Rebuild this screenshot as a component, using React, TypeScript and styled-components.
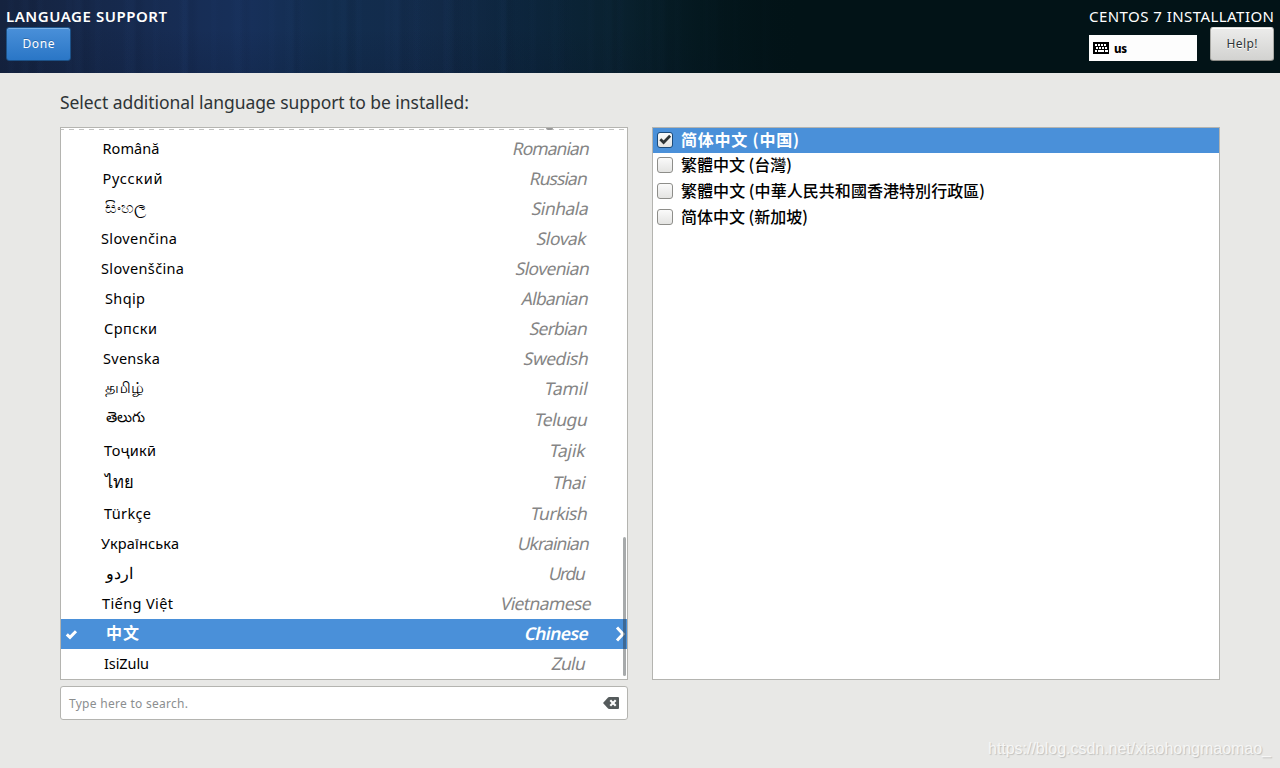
import React, { useLayoutEffect, useRef } from "react";
import styled, { createGlobalStyle, css } from "styled-components";

const GlobalStyle = createGlobalStyle`
  * { box-sizing: border-box; }
  body {
    margin: 0;
    background: #e8e8e6;
    font-family: "Noto Sans", "Open Sans", "Noto Sans CJK SC", sans-serif;
    color: #2e3436;
  }
`;

/* Text whose tracking is adjusted so the line fills a given width. */
const Line = styled.span`
  display: inline-block;
  white-space: pre;
`;

function Tracked({ width, children }: { width: number; children: string }) {
  const ref = useRef<HTMLSpanElement>(null);
  useLayoutEffect(() => {
    const el = ref.current;
    if (!el) return;
    el.style.letterSpacing = "0px";
    const natural = el.offsetWidth ? parseFloat(getComputedStyle(el).width) : 0;
    const gaps = Math.max(1, Array.from(children).length - 1);
    const spacing = (width - natural) / gaps;
    el.style.letterSpacing = `${spacing}px`;
    el.style.marginRight = `${-spacing}px`;
  }, [width, children]);
  return <Line ref={ref}>{children}</Line>;
}

const Page = styled.div`
  position: relative;
  width: 1280px;
  height: 768px;
  overflow: hidden;
  background: #e8e8e6;
`;

const Header = styled.header`
  display: flex;
  justify-content: space-between;
  height: 73px;
  padding: 6px 6px 0;
  background:
    linear-gradient(90deg, #02131700 400px, #02131760 620px, #021317 800px),
    repeating-linear-gradient(90deg, #2a4a8a00 0 7px, #2446800c 9px 12px, #0a183000 15px 17px, #0000 21px 29px),
    repeating-linear-gradient(90deg, #0000 0 19px, #2c54900c 24px 27px, #08142a14 31px 34px, #0000 40px 53px),
    linear-gradient(0deg, #0a163030, #0a163000 60%),
    linear-gradient(90deg, #15233f 0, #16284a 90px, #172d55 190px, #17305a 250px, #122d4e 330px, #132b4b 440px, #0f2a46 540px, #0e2a3e 620px, #08222e 700px, #021317 800px);
`;

const HeaderSide = styled.div<{ $end?: boolean }>`
  display: flex;
  flex-direction: column;
  align-items: ${(p) => (p.$end ? "flex-end" : "flex-start")};
`;

const HeaderTitle = styled.div<{ $bold?: boolean }>`
  height: 21px;
  line-height: 21px;
  font-size: 15px;
  font-weight: ${(p) => (p.$bold ? 600 : 400)};
  color: #fff;
`;

const Button = styled.button<{ $primary?: boolean }>`
  display: flex;
  align-items: center;
  justify-content: center;
  width: ${(p) => (p.$primary ? 65 : 64)}px;
  height: 34px;
  padding: 0 0 2px;
  border-radius: 3px;
  font-family: inherit;
  font-size: 12px;
  ${(p) =>
    p.$primary
      ? css`
          color: #fff;
          border: 1px solid #1c5187;
          background: linear-gradient(#4a90d9, #2a76c6);
          box-shadow: inset 0 1px #7fb2e6;
          text-shadow: 0 -1px #1c518788;
        `
      : css`
          color: #2e3436;
          border: 1px solid #a8a8a4;
          border-top-color: #dcdcda;
          border-bottom-color: #8b8b86;
          background: linear-gradient(#ececeb, #d2d2d0);
          box-shadow: inset 0 1px #fff;
          text-shadow: 0 1px #fff;
        `}
`;

const HeaderControls = styled.div`
  display: flex;
  align-items: flex-end;
  gap: 13px;
`;

const Keyboard = styled.div`
  display: flex;
  align-items: center;
  gap: 5px;
  width: 108px;
  height: 26px;
  padding-left: 4px;
  background: #fdfdfd;
  color: #000;
  font-size: 11.5px;
  font-weight: 800;
`;

const Main = styled.main`
  padding: 17px 60px 0;
`;

const Heading = styled.h1`
  margin: 0;
  height: 37px;
  line-height: 25px;
  font-size: 17.5px;
  font-weight: 400;
`;

const Columns = styled.div`
  display: flex;
  gap: 24px;
`;

const Column = styled.section`
  display: flex;
  flex-direction: column;
  gap: 6px;
  width: 568px;
`;

const Panel = styled.div`
  position: relative;
  height: 553px;
  overflow: hidden;
  border: 1px solid #b4b4b0;
  background: #fff;
`;

const Overflow = styled.div`
  position: relative;
  height: 6px;
  overflow: hidden;
`;

const OverflowDash = styled.div`
  height: 2px;
  background: repeating-linear-gradient(90deg, #c4c4c2 0 3px, #fff 3px 8px, #c4c4c2 8px 10px) 0 1px / 100% 1px no-repeat;
`;

const Descender = styled.div`
  position: absolute;
  left: 485px;
  top: 0;
  width: 7px;
  height: 2px;
  border-radius: 0 0 4px 4px;
  background: #999;
`;

const Row = styled.div<{ $height: number; $selected?: boolean }>`
  display: flex;
  align-items: center;
  height: ${(p) => p.$height}px;
  background: ${(p) => (p.$selected ? "#4a90d9" : "transparent")};
  color: ${(p) => (p.$selected ? "#fff" : "#000")};
  font-weight: ${(p) => (p.$selected ? 700 : 400)};
`;

const Mark = styled.div`
  display: flex;
  width: 38px;
  padding: 1px 0 0 4px;
`;

const Native = styled.div<{ $indent: number; $size: number; $rise: number }>`
  flex: 1;
  padding-left: ${(p) => p.$indent}px;
  padding-bottom: ${(p) => p.$rise}px;
  font-size: ${(p) => p.$size}px;
  line-height: 20px;
`;

const English = styled.div<{ $inset: number; $selected?: boolean }>`
  padding-right: ${(p) => p.$inset}px;
  padding-bottom: 2px;
  line-height: 24px;
  font-size: 17.5px;
  font-weight: ${(p) => (p.$selected ? 600 : 400)};
  color: ${(p) => (p.$selected ? "#fff" : "#858585")};
  transform: skewX(-12deg);
`;

const Arrow = styled.div`
  display: flex;
  width: 30px;
  padding-left: 18px;
`;

const Scrollbar = styled.div`
  position: absolute;
  right: 1px;
  bottom: 3px;
  width: 3px;
  height: 139px;
  border-radius: 2px;
  background: rgba(46, 52, 54, 0.42);
`;

const Search = styled.div`
  display: flex;
  align-items: center;
  justify-content: space-between;
  height: 34px;
  padding: 0 8px;
  border: 1px solid #b4b4b0;
  border-radius: 3px;
  background: #fff;
  color: #8b8e8f;
  font-size: 12px;
`;

const Locale = styled.label<{ $selected?: boolean }>`
  display: flex;
  align-items: center;
  gap: 8px;
  height: ${(p) => (p.$selected ? 25 : 26)}px;
  padding: 0 0 2px 4px;
  background: ${(p) => (p.$selected ? "#4a90d9" : "transparent")};
  color: ${(p) => (p.$selected ? "#fff" : "#000")};
  font-size: 16px;
  font-weight: ${(p) => (p.$selected ? 700 : 500)};
  font-family: "Noto Sans CJK SC", sans-serif;
  line-height: 22px;
`;

const LocaleName = styled.span`
  padding-bottom: 2px;
`;

const Box = styled.span<{ $checked?: boolean }>`
  display: flex;
  width: 16px;
  height: 16px;
  border: 1px solid ${(p) => (p.$checked ? "#1c4a78" : "#8e8e8a")};
  border-radius: 3px;
  background: linear-gradient(#fafafa, #e4e4e2);
`;

const Watermark = styled.div`
  position: absolute;
  right: 9px;
  top: 739px;
  font-family: "Liberation Sans", sans-serif;
  font-size: 16px;
  line-height: 20px;
  color: #f6f6f5;
  text-shadow: 1px 1px 1px #c0c0be;
`;

const Tick = () => (
  <svg width="13" height="11" viewBox="0 0 13 11">
    <path d="M1.8 5.3 5 8.4 11 2.2" fill="none" stroke="#fff" strokeWidth="3" />
  </svg>
);

const DarkTick = () => (
  <svg width="15" height="14" viewBox="0 0 15 14">
    <path d="M2.5 6.2 6 9.7 13 2.5" fill="none" stroke="#2e3436" strokeWidth="2.9" />
  </svg>
);

const Chevron = () => (
  <svg width="10" height="16" viewBox="0 0 10 16">
    <path d="M2 1.5 8 8 2 14.5" fill="none" stroke="#fff" strokeWidth="3" />
  </svg>
);

const KeyboardIcon = () => (
  <svg width="16" height="12" viewBox="0 0 16 12" shapeRendering="crispEdges">
    <rect width="16" height="12" rx="1" fill="#000" />
    <path
      d="M2 2h2v2H2zM5 2h2v2H5zM8 2h2v2H8zM11 2h2v2h-2zM3 5h2v2H3zM6 5h2v2H6zM9 5h2v2H9zM12 5h2v2h-2zM2 8h2v2H2zM5 8h6v2H5zM12 8h3v2h-3z"
      fill="#fff"
    />
  </svg>
);

const ClearIcon = () => (
  <svg width="16" height="12" viewBox="0 0 16 12">
    <path d="M0 6 5 .4Q5.4 0 6 0H15Q16 0 16 1V11Q16 12 15 12H6Q5.4 12 5 11.6Z" fill="#555b5c" />
    <path d="M7.3 3.3 12.7 8.7M12.7 3.3 7.3 8.7" stroke="#fff" strokeWidth="2.1" />
  </svg>
);

type Language = {
  native: string;
  left: number;
  width?: number;
  english: string;
  from: number;
  to: number;
  height?: number;
  size?: number;
  rise?: number;
  selected?: boolean;
};

const languages: Language[] = [
  { native: "Română", left: 102.5, width: 57, english: "Romanian", from: 512, to: 590 },
  { native: "Русский", left: 102.5, width: 60, english: "Russian", from: 529, to: 588 },
  { native: "සිංහල", left: 105, english: "Sinhala", from: 531, to: 589, rise: 5, size: 15.5 },
  { native: "Slovenčina", left: 101, width: 76, english: "Slovak", from: 536, to: 587 },
  { native: "Slovenščina", left: 101, width: 83, english: "Slovenian", from: 515, to: 590 },
  { native: "Shqip", left: 105, width: 40, english: "Albanian", from: 521, to: 589 },
  { native: "Српски", left: 104, width: 53, english: "Serbian", from: 529, to: 588 },
  { native: "Svenska", left: 103, width: 57, english: "Swedish", from: 523, to: 589 },
  { native: "தமிழ்", left: 105, english: "Tamil", from: 544, to: 588, rise: 5, size: 15.5 },
  { native: "తెలుగు", left: 105.5, english: "Telugu", from: 534, to: 588, height: 32, rise: 8 },
  { native: "Тоҷикӣ", left: 104, width: 52, english: "Tajik", from: 549, to: 586 },
  { native: "ไทย", left: 105, english: "Thai", from: 552, to: 586, height: 33, size: 16.5 },
  { native: "Türkçe", left: 104, width: 47, english: "Turkish", from: 530, to: 588 },
  { native: "Українська", left: 101, width: 78, english: "Ukrainian", from: 517, to: 590 },
  { native: "اردو", left: 106, english: "Urdu", from: 548, to: 586, size: 15.5 },
  { native: "Tiếng Việt", left: 102, width: 71, english: "Vietnamese", from: 500, to: 592 },
  { native: "中文", left: 106, width: 33, english: "Chinese", from: 524, to: 589, selected: true, size: 16 },
  { native: "IsiZulu", left: 104, width: 45, english: "Zulu", from: 551, to: 586 },
];

const locales = [
  { text: "简体中文 (中国)", width: 118, selected: true },
  { text: "繁體中文 (台灣)", width: 111 },
  { text: "繁體中文 (中華人民共和國香港特別行政區)", width: 304 },
  { text: "简体中文 (新加坡)", width: 127 },
];

export default function App() {
  return (
    <Page>
      <GlobalStyle />
      <Header>
        <HeaderSide>
          <HeaderTitle $bold>
            <Tracked width={161}>LANGUAGE SUPPORT</Tracked>
          </HeaderTitle>
          <Button $primary>
            <Tracked width={32}>Done</Tracked>
          </Button>
        </HeaderSide>
        <HeaderSide $end>
          <HeaderTitle>
            <Tracked width={185}>CENTOS 7 INSTALLATION</Tracked>
          </HeaderTitle>
          <HeaderControls>
            <Keyboard>
              <KeyboardIcon />
              <Tracked width={13}>us</Tracked>
            </Keyboard>
            <Button>
              <Tracked width={31}>Help!</Tracked>
            </Button>
          </HeaderControls>
        </HeaderSide>
      </Header>
      <Main>
        <Heading>
          <Tracked width={409}>Select additional language support to be installed:</Tracked>
        </Heading>
        <Columns>
          <Column>
            <Panel>
              <Overflow>
                <OverflowDash />
                <Descender />
              </Overflow>
              {languages.map((l) => (
                <Row key={l.english} $height={l.height ?? 30} $selected={l.selected}>
                  <Mark>{l.selected && <Tick />}</Mark>
                  <Native $indent={l.left - 99} $size={l.size ?? 14.5} $rise={l.rise ?? 2}>
                    {l.width ? <Tracked width={l.width}>{l.native}</Tracked> : l.native}
                  </Native>
                  <English $inset={597.5 - l.to} $selected={l.selected}>
                    <Tracked width={l.to - l.from - 1}>{l.english}</Tracked>
                  </English>
                  <Arrow>{l.selected && <Chevron />}</Arrow>
                </Row>
              ))}
              <Scrollbar />
            </Panel>
            <Search>
              <Tracked width={119}>Type here to search.</Tracked>
              <ClearIcon />
            </Search>
          </Column>
          <Column>
            <Panel>
              {locales.map((l) => (
                <Locale key={l.text} $selected={l.selected}>
                  <Box $checked={l.selected}>{l.selected && <DarkTick />}</Box>
                  <LocaleName>
                    <Tracked width={l.width}>{l.text}</Tracked>
                  </LocaleName>
                </Locale>
              ))}
            </Panel>
          </Column>
        </Columns>
      </Main>
      <Watermark>
        <Tracked width={283}>https://blog.csdn.net/xiaohongmaomao_</Tracked>
      </Watermark>
    </Page>
  );
}
